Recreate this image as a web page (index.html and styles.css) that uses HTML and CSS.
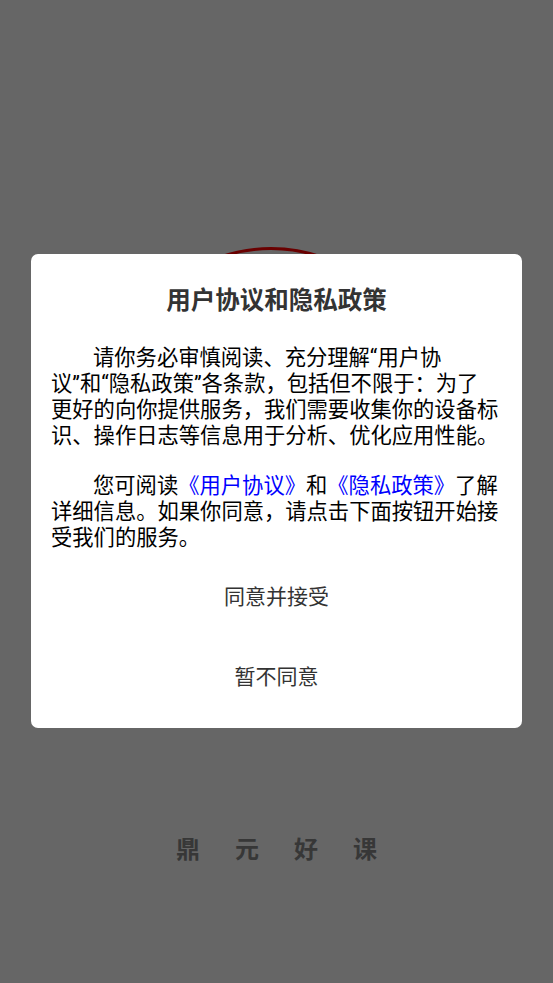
FILE: index.html
```html
<!DOCTYPE html>
<html lang="zh-CN">
<head>
<meta charset="utf-8">
<title>鼎元好课</title>
<link rel="stylesheet" href="styles.css">
</head>
<body>
<div class="screen">
  <div class="logo-ring"></div>
  <div class="brand">
    <span>鼎</span><span>元</span><span>好</span><span>课</span>
  </div>
  <div class="overlay">
    <div class="dialog">
      <h1 class="title">用户协议和隐私政策</h1>
      <p class="para">请你务必审慎阅读、充分理解“用户协<br>议”和“隐私政策”各条款，包括但不限于：为了<br>更好的向你提供服务，我们需要收集你的设备标<br>识、操作日志等信息用于分析、优化应用性能。</p>
      <p class="para para-second">您可阅读<a class="link">《用户协议》</a>和<a class="link">《隐私政策》</a>了解<br>详细信息。如果你同意，请点击下面按钮开始接<br>受我们的服务。</p>
      <div class="actions">
        <div class="btn">同意并接受</div>
        <div class="btn">暂不同意</div>
      </div>
    </div>
  </div>
</div>
</body>
</html>
```
FILE: styles.css
```css
html, body {
  margin: 0;
  padding: 0;
}
body {
  width: 553px;
  height: 983px;
  overflow: hidden;
  background: #666666;
  font-family: Roboto, "Noto Sans CJK SC", sans-serif;
}
.screen {
  position: relative;
  width: 553px;
  height: 983px;
  background: #666666;
}
.logo-ring {
  position: absolute;
  left: 114px;
  top: 247px;
  width: 314px;
  height: 314px;
  border: 3px solid #6a0000;
  border-radius: 50%;
  box-sizing: border-box;
}
.brand {
  position: absolute;
  left: 0;
  right: 0;
  top: 834px;
  display: flex;
  justify-content: center;
  gap: 35px;
  font-size: 24px;
  line-height: 32px;
  font-weight: bold;
  color: #373737;
}
.overlay {
  position: absolute;
  inset: 0;
  display: flex;
  justify-content: center;
  align-items: flex-start;
  padding-top: 254px;
}
.dialog {
  width: 491px;
  height: 474px;
  box-sizing: border-box;
  background: #ffffff;
  border-radius: 7px;
  padding: 31px 20px 11px 20px;
  display: flex;
  flex-direction: column;
}
.title {
  margin: 0;
  text-align: center;
  font-size: 24.5px;
  line-height: 32px;
  font-weight: bold;
  color: #333333;
}
.para {
  margin: 28px 0 0 0;
  font-size: 21.3px;
  line-height: 26px;
  color: #000000;
  text-indent: 42px;
  white-space: nowrap;
}
.para-second {
  margin-top: 24px;
}
.link {
  color: #0000ff;
}
.actions {
  margin-top: 4px;
  display: flex;
  flex-direction: column;
}
.btn {
  height: 80px;
  display: flex;
  align-items: center;
  justify-content: center;
  font-size: 21px;
  color: #333333;
}
```
